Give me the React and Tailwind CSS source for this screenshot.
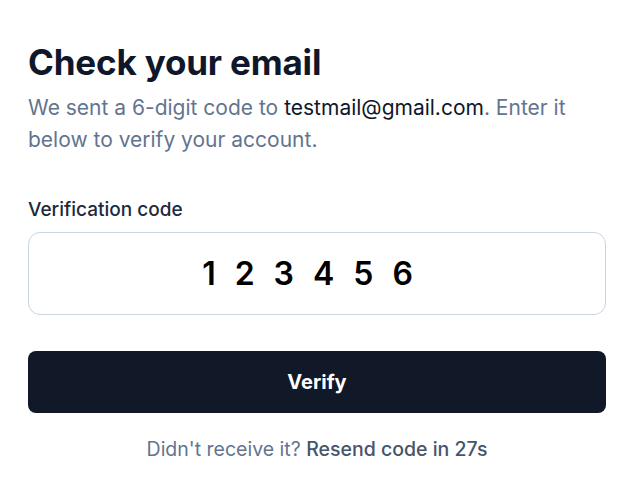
import React, { useState } from "react";

export default function App() {
  const [code, setCode] = useState("123456");
  const seconds = 27;

  return (
    <div className="min-h-screen bg-white font-['Inter',sans-serif]">
      <div className="px-7 pt-[40px]">
        <h1 className="text-[35px] font-bold leading-[44px] tracking-[-0.005em] text-slate-900">
          Check your email
        </h1>
        <p className="mt-[8px] text-[21px] leading-[32px] text-slate-500">
          We sent a 6-digit code to{" "}
          <span className="text-slate-900">testmail@gmail.com</span>. Enter it below to
          verify your account.
        </p>

        {/* 验证码输入 */}
        <label className="mt-[41px] block text-[19px] font-medium leading-[26px] text-slate-800">
          Verification code
        </label>
        <input
          value={code}
          onChange={(e) => setCode(e.target.value.replace(/\D/g, "").slice(0, 6))}
          className="mt-[9px] block h-[83px] w-full rounded-xl border border-slate-300 bg-white text-center font-['Inter',sans-serif] text-[32px] font-semibold tracking-[19px] text-black outline-none"
        />

        <button className="mt-9 flex h-[62px] w-full items-center justify-center rounded-lg bg-[#111827] text-[20px] font-bold text-white">
          Verify
        </button>

        <p className="mt-[22px] text-center text-[19.5px] leading-[28px] text-slate-500">
          Didn't receive it?{" "}
          <span className="font-medium text-slate-600">Resend code in {seconds}s</span>
        </p>
      </div>
    </div>
  );
}
